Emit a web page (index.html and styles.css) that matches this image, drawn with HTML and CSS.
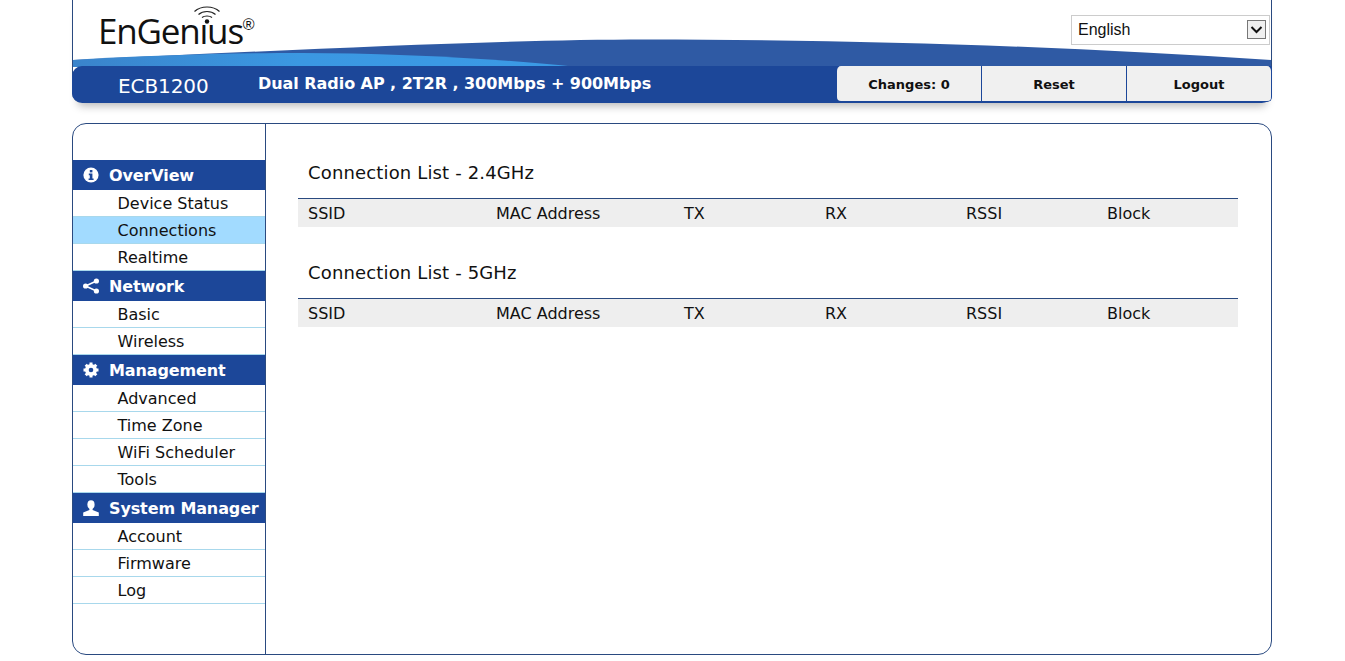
FILE: index.html
```html
<!DOCTYPE html>
<html lang="en">
<head>
  <meta charset="UTF-8">
  <title>EnGenius ECB1200</title>
  <link rel="stylesheet" href="styles.css">
</head>
<body>
  <div class="wrapper">
    <!-- Header -->
    <div class="header">
      <svg class="swoosh" width="1198" height="28" viewBox="0 0 1198 28">
        <defs>
          <linearGradient id="swooshLight" x1="0" x2="1" y1="0" y2="0">
            <stop offset="0" stop-color="#3a84cb"/>
            <stop offset="0.45" stop-color="#3b98e2"/>
            <stop offset="1" stop-color="#3b9ae6"/>
          </linearGradient>
        </defs>
        <path d="M0 21 C200 12 420 0.5 573 0.5 C800 0.5 1000 8 1198 21 V28 H0 Z" fill="#2f5aa4"/>
        <path d="M0 21 C80 16 160 14 228 14 C320 14 430 20 504 28 H0 Z" fill="url(#swooshLight)"/>
      </svg>
      <div class="logo">
        <svg class="logo-wifi" width="28" height="22" viewBox="0 0 28 22">
          <path d="M1.5 6.5 C8 0.5 20 0.5 26.5 6.5 M5.5 9.5 C10 5.5 18 5.5 22.5 9.5 M9 12.5 C11.5 10.5 16.5 10.5 19 12.5" fill="none" stroke="#222" stroke-width="1.2"/>
          <circle cx="14" cy="16.5" r="2.2" fill="#111"/>
        </svg>
        <span class="logo-name">EnGenıus</span><span class="logo-reg">®</span>
      </div>
      <div class="lang">
        <select class="lang-select">
          <option>English</option>
        </select>
        <svg class="lang-arrow" width="19" height="19" viewBox="0 0 19 19">
          <rect x="0.5" y="0.5" width="18" height="18" fill="#f0f0f0" stroke="#777"/>
          <path d="M4.5 7 L9.5 12 L14.5 7" fill="none" stroke="#111" stroke-width="2"/>
        </svg>
      </div>
      <div class="bar">
        <div class="model">ECB1200</div>
        <div class="desc">Dual Radio AP , 2T2R , 300Mbps + 900Mbps</div>
        <div class="actions">
          <a class="action">Changes: 0</a>
          <a class="action">Reset</a>
          <a class="action">Logout</a>
        </div>
      </div>
    </div>

    <!-- Main panel -->
    <div class="panel">
      <div class="sidebar">
        <div class="menu-head">
          <svg class="menu-icon" width="16" height="16" viewBox="0 0 16 16">
            <circle cx="8" cy="8" r="7.6" fill="#fff"/>
            <rect x="6.8" y="3" width="2.6" height="2.4" fill="#1c4799"/>
            <path d="M5.8 6.6 H9.4 V11.4 H10.6 V13 H5.6 V11.4 H6.8 V8.2 H5.8 Z" fill="#1c4799"/>
          </svg>
          OverView
        </div>
        <a class="menu-item">Device Status</a>
        <a class="menu-item active">Connections</a>
        <a class="menu-item">Realtime</a>
        <div class="menu-head">
          <svg class="menu-icon" width="16" height="16" viewBox="0 0 16 16">
            <path d="M13.4 3 L2.6 8 L13.4 13" fill="none" stroke="#fff" stroke-width="1.6"/>
            <circle cx="13.4" cy="3" r="2.6" fill="#fff"/>
            <circle cx="2.6" cy="8" r="2.6" fill="#fff"/>
            <circle cx="13.4" cy="13" r="2.6" fill="#fff"/>
          </svg>
          Network
        </div>
        <a class="menu-item">Basic</a>
        <a class="menu-item">Wireless</a>
        <div class="menu-head">
          <svg class="menu-icon" width="16" height="16" viewBox="0 0 16 16">
            <circle cx="8" cy="8" r="4.2" fill="none" stroke="#fff" stroke-width="3.6"/>
            <path d="M8 0.5 V15.5 M0.5 8 H15.5 M2.7 2.7 L13.3 13.3 M13.3 2.7 L2.7 13.3" stroke="#fff" stroke-width="3"/>
            <circle cx="8" cy="8" r="2.3" fill="#1c4799"/>
          </svg>
          Management
        </div>
        <a class="menu-item">Advanced</a>
        <a class="menu-item">Time Zone</a>
        <a class="menu-item">WiFi Scheduler</a>
        <a class="menu-item">Tools</a>
        <div class="menu-head">
          <svg class="menu-icon" width="16" height="16" viewBox="0 0 16 16">
            <ellipse cx="8" cy="4.6" rx="3.6" ry="4.4" fill="#fff"/>
            <path d="M6.4 8 H9.6 V10 L15.8 12.6 V16 H0.2 V12.6 L6.4 10 Z" fill="#fff"/>
          </svg>
          System Manager
        </div>
        <a class="menu-item">Account</a>
        <a class="menu-item">Firmware</a>
        <a class="menu-item">Log</a>
      </div>

      <div class="content">
        <h2 class="list-title">Connection List - 2.4GHz</h2>
        <table class="list">
          <tr><th class="wide">SSID</th><th class="wide">MAC Address</th><th>TX</th><th>RX</th><th>RSSI</th><th>Block</th></tr>
        </table>
        <h2 class="list-title">Connection List - 5GHz</h2>
        <table class="list">
          <tr><th class="wide">SSID</th><th class="wide">MAC Address</th><th>TX</th><th>RX</th><th>RSSI</th><th>Block</th></tr>
        </table>
      </div>
    </div>
  </div>
</body>
</html>
```
FILE: styles.css
```css
* {
  box-sizing: border-box;
  margin: 0;
  padding: 0;
}

body {
  background-color: #fff;
  color: #111;
  font-family: 'DejaVu Sans', Verdana, sans-serif;
  font-size: 16px;
  overflow: hidden;
}

.wrapper {
  width: 1200px;
  margin-left: 72px;
}

/* Header */
.header {
  position: relative;
  height: 103px;
  display: flex;
  flex-direction: column;
  justify-content: flex-end;
  border-left: 1px solid #2a4a80;
  border-right: 1px solid #2a4a80;
  border-bottom-left-radius: 10px;
  border-bottom-right-radius: 10px;
  box-shadow: 0 9px 9px -6px rgba(0, 0, 0, 0.28);
}

.swoosh {
  position: absolute;
  left: 0;
  top: 39px;
}

.logo {
  position: absolute;
  left: 25px;
  top: 8px;
  display: flex;
  align-items: flex-start;
  color: #111;
}

.logo-name {
  font-family: 'Open Sans', sans-serif;
  font-size: 35px;
  line-height: 46px;
  letter-spacing: -1.2px;
}

.logo-reg {
  font-family: 'Liberation Sans', sans-serif;
  font-size: 16px;
  line-height: 18px;
  margin-top: 8px;
}

.logo-wifi {
  position: absolute;
  left: 95px;
  top: -3px;
}

.lang {
  position: absolute;
  top: 15px;
  right: 1px;
  width: 199px;
  height: 30px;
}

.lang-select {
  width: 100%;
  height: 100%;
  appearance: none;
  border: 1px solid #ccc;
  background-color: #fff;
  padding: 0 0 2px 6px;
  color: #111;
  font-family: 'Liberation Sans', Arial, sans-serif;
  font-size: 16px;
}

.lang-arrow {
  position: absolute;
  top: 5px;
  right: 4px;
  pointer-events: none;
}

.bar {
  position: relative;
  display: flex;
  align-items: center;
  height: 37px;
  margin: 0 -1px;
  background-color: #1c4799;
  border-radius: 10px 0 10px 10px;
  color: #fff;
}

.model {
  width: 186px;
  padding: 2px 0 0 46px;
  font-size: 20px;
  letter-spacing: -0.1px;
  color: #fff;
}

.desc {
  flex: 1;
  padding-bottom: 2px;
  font-weight: bold;
  font-size: 16px;
  letter-spacing: -0.05px;
}

.actions {
  display: flex;
  align-self: stretch;
  margin-bottom: 1px;
  border: 1px solid #1c4799;
  border-top: none;
  border-radius: 5px;
  overflow: hidden;
}

.action {
  display: flex;
  justify-content: center;
  align-items: center;
  width: 145px;
  padding-top: 2px;
  background-color: #f0f0f0;
  border-left: 1px solid #1c4799;
  color: #111;
  font-size: 13px;
  font-weight: bold;
}

.action:first-child {
  width: 144px;
  border-left: none;
}

/* Main panel */
.panel {
  display: flex;
  height: 532px;
  margin-top: 20px;
  border: 1px solid #2a4a80;
  border-radius: 14px;
}

.sidebar {
  width: 193px;
  padding-top: 36px;
  border-right: 1px solid #2a4a80;
}

.menu-head {
  display: flex;
  align-items: center;
  height: 30px;
  padding-left: 10px;
  background-color: #1c4799;
  color: #fff;
  font-size: 16px;
  font-weight: bold;
  letter-spacing: -0.12px;
}

.menu-icon {
  flex: none;
  margin-right: 10px;
}

.menu-item {
  display: flex;
  align-items: center;
  height: 27px;
  padding-left: 44.5px;
  border-bottom: 1px solid #a8d8ec;
  font-size: 16px;
  color: #111;
}

.menu-item.active {
  background-color: #a2dbff;
}

.content {
  flex: 1;
  padding: 36px 32px 0;
}

.list-title {
  height: 38px;
  padding-left: 10px;
  font-size: 18px;
  font-weight: normal;
  letter-spacing: 0.15px;
  line-height: 25px;
}

.list {
  width: 940px;
  margin-bottom: 33px;
  border-top: 1px solid #2a4a80;
  border-collapse: separate;
  border-spacing: 0;
  table-layout: fixed;
}

.list th {
  width: 141px;
  height: 28px;
  padding-left: 10px;
  background-color: #eee;
  font-size: 16px;
  font-weight: normal;
  text-align: left;
}

.list th.wide {
  width: 188px;
}
```
